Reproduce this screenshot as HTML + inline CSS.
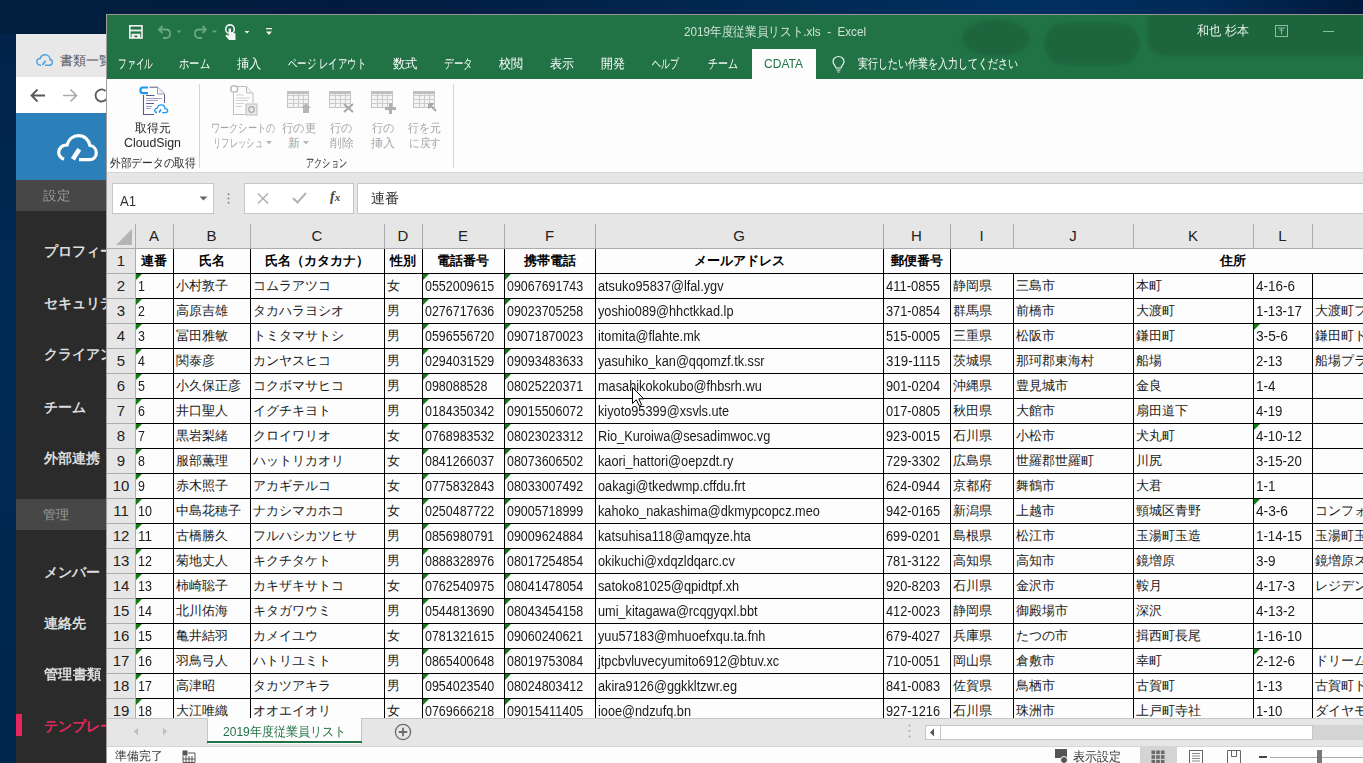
<!DOCTYPE html>
<html><head><meta charset="utf-8">
<style>
*{margin:0;padding:0;box-sizing:border-box}
html,body{width:1363px;height:763px;overflow:hidden;background:#04214a}
body{position:relative;font-family:"Liberation Sans",sans-serif;color:#000}
.t{position:absolute;white-space:nowrap;transform-origin:left center}
.r{position:absolute}
svg{position:absolute;overflow:visible}
.gt{position:absolute;width:0;height:0;border-top:6px solid #107c10;border-right:6px solid transparent}
</style></head><body>
<div class="r" style="left:0px;top:0px;width:1363px;height:763px;background:linear-gradient(90deg,#01203f 0%,#011b3e 25%,#01264f 50%,#00305f 75%,#002a58 88%,#011a3c 100%);"></div>
<div class="r" style="left:0px;top:34px;width:16px;height:729px;background:linear-gradient(180deg,#01234a 0%,#002a55 40%,#00254c 100%);"></div>
<div class="r" style="left:16px;top:34px;width:100px;height:729px;background:#2b2b2b;"></div>
<div class="r" style="left:16px;top:34px;width:100px;height:43px;background:#e8e8e8;"></div>
<svg style="left:36px;top:54px" width="17" height="12" viewBox="0 0 17 12"><path d="M5 11.2 C2 11.2 0.8 9.5 0.8 7.6 C0.8 5.5 2.4 4.3 4.2 4.5 C5 1.9 7.2 0.8 9.2 0.8 C12 0.8 14 2.9 14 5.5 C15.6 5.7 16.3 7 16.3 8.3 C16.3 10 15 11.2 13.5 11.2 H9" fill="none" stroke="#4aa3e0" stroke-width="1.4"/><path d="M6.5 11 L9.5 6.8" stroke="#4aa3e0" stroke-width="1.6"/></svg>
<div class="t" id="t1" style="left:60px;top:53.0px;font-size:13px;line-height:16px;color:#555;">書類一覧</div>
<div class="r" style="left:16px;top:77px;width:100px;height:36px;background:#ffffff;"></div>
<svg style="left:30px;top:88px" width="16" height="15" viewBox="0 0 16 15"><path d="M15 7.5 H2 M7.5 1.5 L1.5 7.5 L7.5 13.5" fill="none" stroke="#5a5a5a" stroke-width="1.8"/></svg>
<svg style="left:62px;top:88px" width="16" height="15" viewBox="0 0 16 15"><path d="M1 7.5 H14 M8.5 1.5 L14.5 7.5 L8.5 13.5" fill="none" stroke="#aaaaaa" stroke-width="1.6"/></svg>
<svg style="left:94px;top:88px" width="16" height="15" viewBox="0 0 16 15"><path d="M13.5 7.5 A6 6 0 1 1 11.5 3" fill="none" stroke="#5a5a5a" stroke-width="1.8"/></svg>
<div class="r" style="left:16px;top:113px;width:100px;height:67px;background:#2b80b9;"></div>
<svg style="left:57px;top:134px" width="41" height="28" viewBox="0 0 41 28"><path d="M7 25.3 C3.5 23.8 1.7 21.3 1.7 18.5 C1.7 14 5.5 10.8 10 11 C11.5 5.5 16 1.6 21.5 1.6 C27.5 1.6 32 6 33 11.5 C37 12 39.3 15.5 39.3 19 C39.3 23 36.5 25.6 32.5 25.6 H22" fill="none" stroke="#fff" stroke-width="3.2"/><path d="M15.8 25.3 L22.3 15.2" stroke="#fff" stroke-width="4.6"/></svg>
<div class="r" style="left:16px;top:180px;width:100px;height:31px;background:#474747;"></div>
<div class="t" id="t2" style="left:43px;top:188.0px;font-size:13px;line-height:16px;color:#9a9a9a;transform:scaleX(1.0385);">設定</div>
<div class="t" id="t3" style="left:44px;top:242.0px;font-size:14px;line-height:18px;color:#dcdcdc;font-weight:bold;">プロフィール</div>
<div class="t" id="t4" style="left:44px;top:294.0px;font-size:14px;line-height:18px;color:#dcdcdc;font-weight:bold;">セキュリティ</div>
<div class="t" id="t5" style="left:44px;top:345.0px;font-size:14px;line-height:18px;color:#dcdcdc;font-weight:bold;">クライアント</div>
<div class="t" id="t6" style="left:44px;top:398.0px;font-size:14px;line-height:18px;color:#dcdcdc;font-weight:bold;transform:scaleX(1.0000);">チーム</div>
<div class="t" id="t7" style="left:44px;top:448.5px;font-size:14px;line-height:18px;color:#dcdcdc;font-weight:bold;transform:scaleX(1.0000);">外部連携</div>
<div class="r" style="left:16px;top:499px;width:100px;height:31px;background:#474747;"></div>
<div class="t" id="t8" style="left:43px;top:506.5px;font-size:13px;line-height:16px;color:#9a9a9a;transform:scaleX(1.0000);">管理</div>
<div class="t" id="t9" style="left:44px;top:563.0px;font-size:14px;line-height:18px;color:#dcdcdc;font-weight:bold;transform:scaleX(1.0000);">メンバー</div>
<div class="t" id="t10" style="left:44px;top:614.0px;font-size:14px;line-height:18px;color:#dcdcdc;font-weight:bold;transform:scaleX(1.0000);">連絡先</div>
<div class="t" id="t11" style="left:44px;top:664.5px;font-size:14px;line-height:18px;color:#dcdcdc;font-weight:bold;transform:scaleX(1.0179);">管理書類</div>
<div class="t" id="t12" style="left:44px;top:716.5px;font-size:14px;line-height:18px;color:#e8265e;font-weight:bold;">テンプレート</div>
<div class="r" style="left:16px;top:714px;width:6px;height:22px;background:#e8265e;"></div>
<div class="r" style="left:106px;top:14px;width:1257px;height:749px;background:#e6e6e6;"></div>
<div class="r" style="left:106px;top:14px;width:1257px;height:1px;background:#9a9696;"></div>
<div class="r" style="left:106px;top:14px;width:1px;height:749px;background:#a29c9c;"></div>
<div class="r" style="left:107px;top:15px;width:1256px;height:64px;background:#217346;"></div>
<svg style="left:107px;top:15px;overflow:hidden" width="1256" height="64"><defs><filter id="bl"><feGaussianBlur stdDeviation="2"/></filter></defs><g fill="#1f653e" filter="url(#bl)"><ellipse cx="889" cy="23" rx="34" ry="18"/><rect x="938" y="8" width="94" height="42" rx="20"/><rect x="1040" y="-10" width="240" height="51" rx="18"/><rect x="1060" y="-10" width="100" height="30" rx="8"/></g></svg>
<svg style="left:129px;top:25px" width="14" height="14" viewBox="0 0 14 14"><rect x="0.8" y="0.8" width="12.2" height="12.2" fill="none" stroke="#f0f0f0" stroke-width="1.6"/><rect x="0.8" y="4.6" width="12.2" height="1.8" fill="#f0f0f0"/><path d="M2.5 8.8 H11.3 V13 H8.3 V10.6 H5.5 V13 H2.5 Z" fill="#f0f0f0"/></svg>
<svg style="left:157px;top:24px" width="30" height="15" viewBox="0 0 30 15"><path d="M2.5 5.5 H9.5 A4.3 4.3 0 0 1 9.5 14 H6 M5.5 2 L2 5.5 L5.5 9" fill="none" stroke="#6aa584" stroke-width="1.8"/><path d="M19.5 6.5 L22 9 L24.5 6.5 Z" fill="#6aa584"/></svg>
<svg style="left:192px;top:24px" width="30" height="15" viewBox="0 0 30 15"><path d="M13.5 5.5 H6.5 A4.3 4.3 0 0 0 6.5 14 H10 M10.5 2 L14 5.5 L10.5 9" fill="none" stroke="#6aa584" stroke-width="1.8"/><path d="M20 6.5 L22.5 9 L25 6.5 Z" fill="#6aa584"/></svg>
<svg style="left:224px;top:24px" width="30" height="17" viewBox="0 0 30 17"><circle cx="6" cy="5.2" r="4.3" fill="none" stroke="#f2f2f2" stroke-width="1.6"/><path d="M4.6 4.5 V12 L2.5 10.5 L1.5 12 L5 16 H11.5 V9.5 L7 8 V4.5 Z" fill="#f2f2f2"/><path d="M20.5 7 L23 9.5 L25.5 7 Z" fill="#f2f2f2"/></svg>
<svg style="left:265px;top:27px" width="8" height="10" viewBox="0 0 8 10"><rect x="1" y="1" width="6" height="1.3" fill="#f2f2f2"/><path d="M1 4.5 H7 L4 8 Z" fill="#f2f2f2"/></svg>
<div class="t" id="t13" style="left:684px;top:23.5px;font-size:13px;line-height:16px;color:#cfe3d6;transform:scaleX(0.8966);">2019年度従業員リスト.xls&nbsp; -&nbsp; Excel</div>
<div class="t" id="t14" style="left:1197px;top:22.5px;font-size:13px;line-height:16px;color:#e4f0e8;transform:scaleX(0.9348);">和也 杉本</div>
<svg style="left:1275px;top:25px" width="13" height="12" viewBox="0 0 13 12"><rect x="0.5" y="0.5" width="12" height="11" fill="none" stroke="#8fbba0"/><path d="M3 3 H10 M6.5 3.5 V9.5 M4.5 6 L6.5 4 L8.5 6" fill="none" stroke="#8fbba0"/></svg>
<div class="r" style="left:1323px;top:31px;width:11px;height:1px;background:#8fbba0;"></div>
<div class="t" id="t15" style="left:118px;top:55.5px;font-size:13px;line-height:16px;color:#ffffff;transform:scaleX(0.6731);">ファイル</div>
<div class="t" id="t16" style="left:179px;top:55.5px;font-size:13px;line-height:16px;color:#ffffff;transform:scaleX(0.7949);">ホーム</div>
<div class="t" id="t17" style="left:236.5px;top:55.5px;font-size:13px;line-height:16px;color:#ffffff;transform:scaleX(0.9423);">挿入</div>
<div class="t" id="t18" style="left:288px;top:55.5px;font-size:13px;line-height:16px;color:#ffffff;transform:scaleX(0.7247);">ページ レイアウト</div>
<div class="t" id="t19" style="left:392.5px;top:55.5px;font-size:13px;line-height:16px;color:#ffffff;transform:scaleX(0.9423);">数式</div>
<div class="t" id="t20" style="left:443.5px;top:55.5px;font-size:13px;line-height:16px;color:#ffffff;transform:scaleX(0.7308);">データ</div>
<div class="t" id="t21" style="left:498.5px;top:55.5px;font-size:13px;line-height:16px;color:#ffffff;transform:scaleX(0.9231);">校閲</div>
<div class="t" id="t22" style="left:549.5px;top:55.5px;font-size:13px;line-height:16px;color:#ffffff;transform:scaleX(0.9231);">表示</div>
<div class="t" id="t23" style="left:601px;top:55.5px;font-size:13px;line-height:16px;color:#ffffff;transform:scaleX(0.9231);">開発</div>
<div class="t" id="t24" style="left:652px;top:55.5px;font-size:13px;line-height:16px;color:#ffffff;transform:scaleX(0.6923);">ヘルプ</div>
<div class="t" id="t25" style="left:707.5px;top:55.5px;font-size:13px;line-height:16px;color:#ffffff;transform:scaleX(0.7692);">チーム</div>
<div class="r" style="left:752px;top:49px;width:64px;height:30px;background:#fdfdfd;"></div>
<div class="t" id="t26" style="left:764px;top:55.5px;font-size:13px;line-height:16px;color:#217346;transform:scaleX(0.9255);">CDATA</div>
<svg style="left:832px;top:56px" width="13" height="17" viewBox="0 0 13 17"><path d="M4 12 C4 9.8 1 8.5 1 5.5 A5.5 5 0 0 1 12 5.5 C12 8.5 9 9.8 9 12 Z" fill="none" stroke="#f2f2f2" stroke-width="1.2"/><path d="M4.5 14 H8.5 M5.5 16 H7.5" stroke="#f2f2f2" stroke-width="1.2"/></svg>
<div class="t" id="t27" style="left:858px;top:55.5px;font-size:13px;line-height:16px;color:#ffffff;transform:scaleX(0.7692);">実行したい作業を入力してください</div>
<div class="r" style="left:107px;top:79px;width:1256px;height:93px;background:#fdfdfd;"></div>
<div class="r" style="left:107px;top:172px;width:1256px;height:1px;background:#d6d6d6;"></div>
<svg style="left:140px;top:86px" width="30" height="30" viewBox="140 86 30 30"><path d="M149.5 87.2 H157.5 L164.5 94 V103" fill="none" stroke="#5a5a8a" stroke-width="1"/><path d="M157.5 87.2 V94 H164.5" fill="#eef0f8" stroke="#8a8a8a" stroke-width="0.8"/><path d="M143.5 95 V114.5 H154" fill="none" stroke="#5a5a8a" stroke-width="1.1"/><path d="M146 95.5 H154.5 M146 103.5 H154" stroke="#5a5a8a" stroke-width="1"/><path d="M146 98.5 H162 M146 100.5 H158 M146 106.5 H152 M146 108.5 H151" stroke="#a0a0c8" stroke-width="1"/><path d="M148 87.5 H142.8 A2.3 2.8 0 0 0 142.8 93.2 H148" fill="none" stroke="#1a9af0" stroke-width="2.2"/><path d="M157 112.5 C155.5 112.5 154.8 111.4 154.8 110.4 C154.8 109 155.8 108.3 157 108.4 C157.5 106.2 158.8 104.8 161 104.8 C163.3 104.8 165 106.4 165 108.6 C166.5 108.8 167.7 109.6 167.7 110.8 C167.7 112 166.8 112.6 165.5 112.6 H162" fill="none" stroke="#1a9af0" stroke-width="1.3"/><path d="M159 112.5 L161 109.3" stroke="#1a9af0" stroke-width="1.6"/></svg>
<div class="t" id="t28" style="left:135px;top:120.5px;font-size:12px;line-height:15px;color:#262626;transform:scaleX(0.9861);">取得元</div>
<div class="t" id="t29" style="left:124px;top:135.0px;font-size:13px;line-height:16px;color:#262626;transform:scaleX(0.9500);">CloudSign</div>
<div class="t" id="t30" style="left:110px;top:155.5px;font-size:12px;line-height:15px;color:#2a2a2a;transform:scaleX(0.8958);">外部データの取得</div>
<div class="r" style="left:199px;top:84px;width:1px;height:84px;background:#d5d5d5;"></div>
<svg style="left:230px;top:85px" width="32" height="33" viewBox="0 0 32 33"><path d="M7 1.5 H16.5 L23 8 V18" fill="none" stroke="#bdbdbd" stroke-width="1"/><path d="M16.5 1.5 V8 H23" fill="#f2f2f2" stroke="#bdbdbd"/><path d="M3.5 8 V29.5 H15" fill="none" stroke="#bdbdbd"/><path d="M6 10 H14 M6 13 H20 M6 15.5 H18 M6 18.5 H14 M6 21.5 H12" stroke="#d0d0d0"/><rect x="1" y="1" width="6.5" height="6" rx="2" fill="none" stroke="#bdbdbd" stroke-width="1.6"/><rect x="16" y="19" width="11" height="11" fill="#e8e8e8" stroke="#bdbdbd"/><circle cx="21.5" cy="24.5" r="2.8" fill="none" stroke="#a8a8a8" stroke-width="1.2"/></svg>
<svg style="left:287px;top:91px" width="26" height="24" viewBox="0 0 26 24"><rect x="0.5" y="0.5" width="21" height="16" fill="#f4f4f4" stroke="#c4c4c4"/><path d="M0.5 4.5 H21.5 M0.5 8.5 H21.5 M0.5 12.5 H21.5 M6.5 0.5 V16.5 M11.5 0.5 V16.5 M16.5 0.5 V16.5" stroke="#cbcbcb"/><rect x="0.5" y="0.5" width="21" height="2.5" fill="#bebebe"/><path d="M14 17 L19 12 L24 17 H22 V22 H16 V17 Z" fill="#b5b5b5"/></svg>
<svg style="left:329px;top:91px" width="26" height="24" viewBox="0 0 26 24"><rect x="0.5" y="0.5" width="21" height="16" fill="#f4f4f4" stroke="#c4c4c4"/><path d="M0.5 4.5 H21.5 M0.5 8.5 H21.5 M0.5 12.5 H21.5 M6.5 0.5 V16.5 M11.5 0.5 V16.5 M16.5 0.5 V16.5" stroke="#cbcbcb"/><rect x="0.5" y="0.5" width="21" height="2.5" fill="#bebebe"/><path d="M15 13 L24 21 M24 13 L15 21" stroke="#a8a8a8" stroke-width="2"/></svg>
<svg style="left:371px;top:91px" width="26" height="24" viewBox="0 0 26 24"><rect x="0.5" y="0.5" width="21" height="16" fill="#f4f4f4" stroke="#c4c4c4"/><path d="M0.5 4.5 H21.5 M0.5 8.5 H21.5 M0.5 12.5 H21.5 M6.5 0.5 V16.5 M11.5 0.5 V16.5 M16.5 0.5 V16.5" stroke="#cbcbcb"/><rect x="0.5" y="0.5" width="21" height="2.5" fill="#bebebe"/><path d="M19.5 12 V23 M14 17.5 H25" stroke="#b0b0b0" stroke-width="3"/></svg>
<svg style="left:413px;top:91px" width="26" height="24" viewBox="0 0 26 24"><rect x="0.5" y="0.5" width="21" height="16" fill="#f4f4f4" stroke="#c4c4c4"/><path d="M0.5 4.5 H21.5 M0.5 8.5 H21.5 M0.5 12.5 H21.5 M6.5 0.5 V16.5 M11.5 0.5 V16.5 M16.5 0.5 V16.5" stroke="#cbcbcb"/><rect x="0.5" y="0.5" width="21" height="2.5" fill="#bebebe"/><path d="M16 13 L23 20 M16 13 H20.5 M16 13 V17.5" fill="none" stroke="#a8a8a8" stroke-width="2"/></svg>
<div class="t" id="t31" style="left:210.5px;top:120.5px;font-size:12px;line-height:15px;color:#a6a6a6;transform:scaleX(0.7619);">ワークシートの</div>
<div class="t" id="t32" style="left:213px;top:135.5px;font-size:12px;line-height:15px;color:#a6a6a6;transform:scaleX(0.6944);">リフレッシュ</div>
<svg style="left:266px;top:141px" width="6" height="4" viewBox="0 0 6 4"><path d="M0 0 H6 L3 3.5 Z" fill="#b8b8b8"/></svg>
<div class="t" id="t33" style="left:282px;top:120.5px;font-size:12px;line-height:15px;color:#a6a6a6;transform:scaleX(0.9444);">行の更</div>
<div class="t" id="t34" style="left:288px;top:135.5px;font-size:12px;line-height:15px;color:#a6a6a6;transform:scaleX(1.0000);">新</div>
<svg style="left:303px;top:141px" width="6" height="4" viewBox="0 0 6 4"><path d="M0 0 H6 L3 3.5 Z" fill="#b8b8b8"/></svg>
<div class="t" id="t35" style="left:330px;top:120.5px;font-size:12px;line-height:15px;color:#a6a6a6;transform:scaleX(0.9375);">行の</div>
<div class="t" id="t36" style="left:330px;top:135.5px;font-size:12px;line-height:15px;color:#a6a6a6;transform:scaleX(0.9792);">削除</div>
<div class="t" id="t37" style="left:371.5px;top:120.5px;font-size:12px;line-height:15px;color:#a6a6a6;transform:scaleX(0.9375);">行の</div>
<div class="t" id="t38" style="left:371px;top:135.5px;font-size:12px;line-height:15px;color:#a6a6a6;transform:scaleX(1.0000);">挿入</div>
<div class="t" id="t39" style="left:408px;top:120.5px;font-size:12px;line-height:15px;color:#a6a6a6;transform:scaleX(0.9167);">行を元</div>
<div class="t" id="t40" style="left:408.5px;top:135.5px;font-size:12px;line-height:15px;color:#a6a6a6;transform:scaleX(0.8750);">に戻す</div>
<div class="t" id="t41" style="left:305.5px;top:156.0px;font-size:12px;line-height:15px;color:#2a2a2a;transform:scaleX(0.6833);">アクション</div>
<div class="r" style="left:453px;top:84px;width:1px;height:84px;background:#d5d5d5;"></div>
<div class="r" style="left:112px;top:183px;width:102px;height:31px;background:#c6c6c6;"></div>
<div class="r" style="left:113px;top:184px;width:100px;height:29px;background:#ffffff;"></div>
<div class="t" id="t42" style="left:120px;top:191.5px;font-size:14px;line-height:18px;color:#333333;transform:scaleX(0.9343);">A1</div>
<svg style="left:199px;top:196px" width="9" height="5" viewBox="0 0 9 5"><path d="M0.5 0.5 H8.5 L4.5 4.5 Z" fill="#666"/></svg>
<svg style="left:227px;top:193px" width="3" height="11" viewBox="0 0 3 11"><circle cx="1.5" cy="1.2" r="1" fill="#888"/><circle cx="1.5" cy="5.5" r="1" fill="#888"/><circle cx="1.5" cy="9.8" r="1" fill="#888"/></svg>
<div class="r" style="left:244px;top:183px;width:110px;height:31px;background:#c6c6c6;"></div>
<div class="r" style="left:245px;top:184px;width:108px;height:29px;background:#ffffff;"></div>
<svg style="left:257px;top:193px" width="12" height="11" viewBox="0 0 12 11"><path d="M1 0.5 L11 10.5 M11 0.5 L1 10.5" stroke="#b0b0b0" stroke-width="1.5"/></svg>
<svg style="left:292px;top:192px" width="15" height="12" viewBox="0 0 15 12"><path d="M1 6 L5.5 10.5 L14 1" fill="none" stroke="#b5b5b5" stroke-width="2.2"/></svg>
<div class="t" style="left:330px;top:189px;font-family:'Liberation Serif',serif;font-style:italic;font-weight:bold;font-size:14px;line-height:16px;color:#444">f<span style="font-size:11px">x</span></div>
<div class="r" style="left:357px;top:183px;width:1010px;height:31px;background:#c6c6c6;"></div>
<div class="r" style="left:358px;top:184px;width:1010px;height:29px;background:#ffffff;"></div>
<div class="t" id="t43" style="left:370.5px;top:189.0px;font-size:14px;line-height:18px;color:#333333;transform:scaleX(1.0179);">連番</div>
<div class="r" style="left:107px;top:224px;width:1256px;height:24px;background:#e6e6e6;"></div>
<div class="r" style="left:135px;top:248px;width:1228px;height:470px;background:#fdfdfd;"></div>
<div class="t" id="t44" style="left:135px;top:226.0px;font-size:15px;line-height:19px;color:#222;width:38px;text-align:center;transform-origin:center;">A</div>
<div class="t" id="t45" style="left:173px;top:226.0px;font-size:15px;line-height:19px;color:#222;width:77px;text-align:center;transform-origin:center;">B</div>
<div class="t" id="t46" style="left:250px;top:226.0px;font-size:15px;line-height:19px;color:#222;width:134px;text-align:center;transform-origin:center;">C</div>
<div class="t" id="t47" style="left:384px;top:226.0px;font-size:15px;line-height:19px;color:#222;width:38px;text-align:center;transform-origin:center;">D</div>
<div class="t" id="t48" style="left:422px;top:226.0px;font-size:15px;line-height:19px;color:#222;width:82px;text-align:center;transform-origin:center;">E</div>
<div class="t" id="t49" style="left:504px;top:226.0px;font-size:15px;line-height:19px;color:#222;width:91px;text-align:center;transform-origin:center;">F</div>
<div class="t" id="t50" style="left:595px;top:226.0px;font-size:15px;line-height:19px;color:#222;width:288px;text-align:center;transform-origin:center;">G</div>
<div class="t" id="t51" style="left:883px;top:226.0px;font-size:15px;line-height:19px;color:#222;width:67px;text-align:center;transform-origin:center;">H</div>
<div class="t" id="t52" style="left:950px;top:226.0px;font-size:15px;line-height:19px;color:#222;width:63px;text-align:center;transform-origin:center;">I</div>
<div class="t" id="t53" style="left:1013px;top:226.0px;font-size:15px;line-height:19px;color:#222;width:120px;text-align:center;transform-origin:center;">J</div>
<div class="t" id="t54" style="left:1133px;top:226.0px;font-size:15px;line-height:19px;color:#222;width:120px;text-align:center;transform-origin:center;">K</div>
<div class="t" id="t55" style="left:1253px;top:226.0px;font-size:15px;line-height:19px;color:#222;width:59px;text-align:center;transform-origin:center;">L</div>
<div class="t" id="t56" style="left:1312px;top:226.0px;font-size:15px;line-height:19px;color:#222;width:168px;text-align:center;transform-origin:center;">M</div>
<div class="r" style="left:173px;top:224px;width:1px;height:24px;background:#ababab;"></div>
<div class="r" style="left:250px;top:224px;width:1px;height:24px;background:#ababab;"></div>
<div class="r" style="left:384px;top:224px;width:1px;height:24px;background:#ababab;"></div>
<div class="r" style="left:422px;top:224px;width:1px;height:24px;background:#ababab;"></div>
<div class="r" style="left:504px;top:224px;width:1px;height:24px;background:#ababab;"></div>
<div class="r" style="left:595px;top:224px;width:1px;height:24px;background:#ababab;"></div>
<div class="r" style="left:883px;top:224px;width:1px;height:24px;background:#ababab;"></div>
<div class="r" style="left:950px;top:224px;width:1px;height:24px;background:#ababab;"></div>
<div class="r" style="left:1013px;top:224px;width:1px;height:24px;background:#ababab;"></div>
<div class="r" style="left:1133px;top:224px;width:1px;height:24px;background:#ababab;"></div>
<div class="r" style="left:1253px;top:224px;width:1px;height:24px;background:#ababab;"></div>
<div class="r" style="left:1312px;top:224px;width:1px;height:24px;background:#ababab;"></div>
<div class="r" style="left:1480px;top:224px;width:1px;height:24px;background:#ababab;"></div>
<div class="t" id="t57" style="left:107px;top:251.0px;font-size:15px;line-height:19px;color:#222;width:28px;text-align:center;transform-origin:center;">1</div>
<div class="r" style="left:107px;top:273px;width:28px;height:1px;background:#ababab;"></div>
<div class="t" id="t58" style="left:107px;top:276.0px;font-size:15px;line-height:19px;color:#222;width:28px;text-align:center;transform-origin:center;">2</div>
<div class="r" style="left:107px;top:298px;width:28px;height:1px;background:#ababab;"></div>
<div class="t" id="t59" style="left:107px;top:301.0px;font-size:15px;line-height:19px;color:#222;width:28px;text-align:center;transform-origin:center;">3</div>
<div class="r" style="left:107px;top:323px;width:28px;height:1px;background:#ababab;"></div>
<div class="t" id="t60" style="left:107px;top:326.0px;font-size:15px;line-height:19px;color:#222;width:28px;text-align:center;transform-origin:center;">4</div>
<div class="r" style="left:107px;top:348px;width:28px;height:1px;background:#ababab;"></div>
<div class="t" id="t61" style="left:107px;top:351.0px;font-size:15px;line-height:19px;color:#222;width:28px;text-align:center;transform-origin:center;">5</div>
<div class="r" style="left:107px;top:373px;width:28px;height:1px;background:#ababab;"></div>
<div class="t" id="t62" style="left:107px;top:376.0px;font-size:15px;line-height:19px;color:#222;width:28px;text-align:center;transform-origin:center;">6</div>
<div class="r" style="left:107px;top:398px;width:28px;height:1px;background:#ababab;"></div>
<div class="t" id="t63" style="left:107px;top:401.0px;font-size:15px;line-height:19px;color:#222;width:28px;text-align:center;transform-origin:center;">7</div>
<div class="r" style="left:107px;top:423px;width:28px;height:1px;background:#ababab;"></div>
<div class="t" id="t64" style="left:107px;top:426.0px;font-size:15px;line-height:19px;color:#222;width:28px;text-align:center;transform-origin:center;">8</div>
<div class="r" style="left:107px;top:448px;width:28px;height:1px;background:#ababab;"></div>
<div class="t" id="t65" style="left:107px;top:451.0px;font-size:15px;line-height:19px;color:#222;width:28px;text-align:center;transform-origin:center;">9</div>
<div class="r" style="left:107px;top:473px;width:28px;height:1px;background:#ababab;"></div>
<div class="t" id="t66" style="left:107px;top:476.0px;font-size:15px;line-height:19px;color:#222;width:28px;text-align:center;transform-origin:center;">10</div>
<div class="r" style="left:107px;top:498px;width:28px;height:1px;background:#ababab;"></div>
<div class="t" id="t67" style="left:107px;top:501.0px;font-size:15px;line-height:19px;color:#222;width:28px;text-align:center;transform-origin:center;">11</div>
<div class="r" style="left:107px;top:523px;width:28px;height:1px;background:#ababab;"></div>
<div class="t" id="t68" style="left:107px;top:526.0px;font-size:15px;line-height:19px;color:#222;width:28px;text-align:center;transform-origin:center;">12</div>
<div class="r" style="left:107px;top:548px;width:28px;height:1px;background:#ababab;"></div>
<div class="t" id="t69" style="left:107px;top:551.0px;font-size:15px;line-height:19px;color:#222;width:28px;text-align:center;transform-origin:center;">13</div>
<div class="r" style="left:107px;top:573px;width:28px;height:1px;background:#ababab;"></div>
<div class="t" id="t70" style="left:107px;top:576.0px;font-size:15px;line-height:19px;color:#222;width:28px;text-align:center;transform-origin:center;">14</div>
<div class="r" style="left:107px;top:598px;width:28px;height:1px;background:#ababab;"></div>
<div class="t" id="t71" style="left:107px;top:601.0px;font-size:15px;line-height:19px;color:#222;width:28px;text-align:center;transform-origin:center;">15</div>
<div class="r" style="left:107px;top:623px;width:28px;height:1px;background:#ababab;"></div>
<div class="t" id="t72" style="left:107px;top:626.0px;font-size:15px;line-height:19px;color:#222;width:28px;text-align:center;transform-origin:center;">16</div>
<div class="r" style="left:107px;top:648px;width:28px;height:1px;background:#ababab;"></div>
<div class="t" id="t73" style="left:107px;top:651.0px;font-size:15px;line-height:19px;color:#222;width:28px;text-align:center;transform-origin:center;">17</div>
<div class="r" style="left:107px;top:673px;width:28px;height:1px;background:#ababab;"></div>
<div class="t" id="t74" style="left:107px;top:676.0px;font-size:15px;line-height:19px;color:#222;width:28px;text-align:center;transform-origin:center;">18</div>
<div class="r" style="left:107px;top:698px;width:28px;height:1px;background:#ababab;"></div>
<div class="t" id="t75" style="left:107px;top:701.0px;font-size:15px;line-height:19px;color:#222;width:28px;text-align:center;transform-origin:center;">19</div>
<div class="r" style="left:107px;top:723px;width:28px;height:1px;background:#ababab;"></div>
<div class="t" id="t76" style="left:135px;top:253.0px;font-size:13px;line-height:16px;color:#000;font-weight:bold;width:38px;text-align:center;transform-origin:center;">連番</div>
<div class="t" id="t77" style="left:173px;top:253.0px;font-size:13px;line-height:16px;color:#000;font-weight:bold;width:77px;text-align:center;transform-origin:center;">氏名</div>
<div class="t" id="t78" style="left:250px;top:253.0px;font-size:13px;line-height:16px;color:#000;font-weight:bold;width:134px;text-align:center;transform-origin:center;">氏名（カタカナ）</div>
<div class="t" id="t79" style="left:384px;top:253.0px;font-size:13px;line-height:16px;color:#000;font-weight:bold;width:38px;text-align:center;transform-origin:center;">性別</div>
<div class="t" id="t80" style="left:422px;top:253.0px;font-size:13px;line-height:16px;color:#000;font-weight:bold;width:82px;text-align:center;transform-origin:center;">電話番号</div>
<div class="t" id="t81" style="left:504px;top:253.0px;font-size:13px;line-height:16px;color:#000;font-weight:bold;width:91px;text-align:center;transform-origin:center;">携帯電話</div>
<div class="t" id="t82" style="left:595px;top:253.0px;font-size:13px;line-height:16px;color:#000;font-weight:bold;width:288px;text-align:center;transform-origin:center;">メールアドレス</div>
<div class="t" id="t83" style="left:883px;top:253.0px;font-size:13px;line-height:16px;color:#000;font-weight:bold;width:67px;text-align:center;transform-origin:center;">郵便番号</div>
<div class="t" id="t84" style="left:950px;top:253.0px;font-size:13px;line-height:16px;color:#000;font-weight:bold;width:566px;text-align:center;transform-origin:center;">住所</div>
<div class="t" id="t85" style="left:138px;top:277.0px;font-size:14px;line-height:18px;color:#1a1a1a;transform:scaleX(0.8850);">1</div>
<div class="t" id="t86" style="left:176px;top:278.0px;font-size:13px;line-height:16px;color:#1a1a1a;">小村敦子</div>
<div class="t" id="t87" style="left:253px;top:278.0px;font-size:13px;line-height:16px;color:#1a1a1a;">コムラアツコ</div>
<div class="t" id="t88" style="left:387px;top:278.0px;font-size:13px;line-height:16px;color:#1a1a1a;">女</div>
<div class="t" id="t89" style="left:425px;top:277.0px;font-size:14px;line-height:18px;color:#1a1a1a;transform:scaleX(0.8899);">0552009615</div>
<div class="t" id="t90" style="left:507px;top:277.0px;font-size:14px;line-height:18px;color:#1a1a1a;transform:scaleX(0.8896);">09067691743</div>
<div class="t" id="t91" style="left:598px;top:277.0px;font-size:14px;line-height:18px;color:#1a1a1a;transform:scaleX(0.91);">atsuko95837@lfal.ygv</div>
<div class="t" id="t92" style="left:886px;top:277.0px;font-size:14px;line-height:18px;color:#1a1a1a;transform:scaleX(0.9305);">411-0855</div>
<div class="t" id="t93" style="left:953px;top:278.0px;font-size:13px;line-height:16px;color:#1a1a1a;">静岡県</div>
<div class="t" id="t94" style="left:1016px;top:278.0px;font-size:13px;line-height:16px;color:#1a1a1a;">三島市</div>
<div class="t" id="t95" style="left:1136px;top:278.0px;font-size:13px;line-height:16px;color:#1a1a1a;">本町</div>
<div class="t" id="t96" style="left:1256px;top:277.0px;font-size:14px;line-height:18px;color:#1a1a1a;transform:scaleX(0.9612);">4-16-6</div>
<div class="gt" style="left:136px;top:274px"></div>
<div class="gt" style="left:423px;top:274px"></div>
<div class="gt" style="left:505px;top:274px"></div>
<div class="t" id="t97" style="left:138px;top:302.0px;font-size:14px;line-height:18px;color:#1a1a1a;transform:scaleX(0.8850);">2</div>
<div class="t" id="t98" style="left:176px;top:303.0px;font-size:13px;line-height:16px;color:#1a1a1a;">高原吉雄</div>
<div class="t" id="t99" style="left:253px;top:303.0px;font-size:13px;line-height:16px;color:#1a1a1a;">タカハラヨシオ</div>
<div class="t" id="t100" style="left:387px;top:303.0px;font-size:13px;line-height:16px;color:#1a1a1a;">男</div>
<div class="t" id="t101" style="left:425px;top:302.0px;font-size:14px;line-height:18px;color:#1a1a1a;transform:scaleX(0.8899);">0276717636</div>
<div class="t" id="t102" style="left:507px;top:302.0px;font-size:14px;line-height:18px;color:#1a1a1a;transform:scaleX(0.8896);">09023705258</div>
<div class="t" id="t103" style="left:598px;top:302.0px;font-size:14px;line-height:18px;color:#1a1a1a;transform:scaleX(0.91);">yoshio089@hhctkkad.lp</div>
<div class="t" id="t104" style="left:886px;top:302.0px;font-size:14px;line-height:18px;color:#1a1a1a;transform:scaleX(0.9143);">371-0854</div>
<div class="t" id="t105" style="left:953px;top:303.0px;font-size:13px;line-height:16px;color:#1a1a1a;">群馬県</div>
<div class="t" id="t106" style="left:1016px;top:303.0px;font-size:13px;line-height:16px;color:#1a1a1a;">前橋市</div>
<div class="t" id="t107" style="left:1136px;top:303.0px;font-size:13px;line-height:16px;color:#1a1a1a;">大渡町</div>
<div class="t" id="t108" style="left:1256px;top:302.0px;font-size:14px;line-height:18px;color:#1a1a1a;transform:scaleX(0.9489);">1-13-17</div>
<div class="t" id="t109" style="left:1315px;top:303.0px;font-size:13px;line-height:16px;color:#1a1a1a;">大渡町フ</div>
<div class="gt" style="left:136px;top:299px"></div>
<div class="gt" style="left:423px;top:299px"></div>
<div class="gt" style="left:505px;top:299px"></div>
<div class="t" id="t110" style="left:138px;top:327.0px;font-size:14px;line-height:18px;color:#1a1a1a;transform:scaleX(0.8850);">3</div>
<div class="t" id="t111" style="left:176px;top:328.0px;font-size:13px;line-height:16px;color:#1a1a1a;">冨田雅敏</div>
<div class="t" id="t112" style="left:253px;top:328.0px;font-size:13px;line-height:16px;color:#1a1a1a;">トミタマサトシ</div>
<div class="t" id="t113" style="left:387px;top:328.0px;font-size:13px;line-height:16px;color:#1a1a1a;">男</div>
<div class="t" id="t114" style="left:425px;top:327.0px;font-size:14px;line-height:18px;color:#1a1a1a;transform:scaleX(0.8899);">0596556720</div>
<div class="t" id="t115" style="left:507px;top:327.0px;font-size:14px;line-height:18px;color:#1a1a1a;transform:scaleX(0.8896);">09071870023</div>
<div class="t" id="t116" style="left:598px;top:327.0px;font-size:14px;line-height:18px;color:#1a1a1a;transform:scaleX(0.91);">itomita@flahte.mk</div>
<div class="t" id="t117" style="left:886px;top:327.0px;font-size:14px;line-height:18px;color:#1a1a1a;transform:scaleX(0.9143);">515-0005</div>
<div class="t" id="t118" style="left:953px;top:328.0px;font-size:13px;line-height:16px;color:#1a1a1a;">三重県</div>
<div class="t" id="t119" style="left:1016px;top:328.0px;font-size:13px;line-height:16px;color:#1a1a1a;">松阪市</div>
<div class="t" id="t120" style="left:1136px;top:328.0px;font-size:13px;line-height:16px;color:#1a1a1a;">鎌田町</div>
<div class="t" id="t121" style="left:1256px;top:327.0px;font-size:14px;line-height:18px;color:#1a1a1a;transform:scaleX(0.9790);">3-5-6</div>
<div class="t" id="t122" style="left:1315px;top:328.0px;font-size:13px;line-height:16px;color:#1a1a1a;">鎌田町ド</div>
<div class="gt" style="left:136px;top:324px"></div>
<div class="gt" style="left:423px;top:324px"></div>
<div class="gt" style="left:505px;top:324px"></div>
<div class="gt" style="left:1254px;top:324px"></div>
<div class="t" id="t123" style="left:138px;top:352.0px;font-size:14px;line-height:18px;color:#1a1a1a;transform:scaleX(0.8850);">4</div>
<div class="t" id="t124" style="left:176px;top:353.0px;font-size:13px;line-height:16px;color:#1a1a1a;">関泰彦</div>
<div class="t" id="t125" style="left:253px;top:353.0px;font-size:13px;line-height:16px;color:#1a1a1a;">カンヤスヒコ</div>
<div class="t" id="t126" style="left:387px;top:353.0px;font-size:13px;line-height:16px;color:#1a1a1a;">男</div>
<div class="t" id="t127" style="left:425px;top:352.0px;font-size:14px;line-height:18px;color:#1a1a1a;transform:scaleX(0.8899);">0294031529</div>
<div class="t" id="t128" style="left:507px;top:352.0px;font-size:14px;line-height:18px;color:#1a1a1a;transform:scaleX(0.8896);">09093483633</div>
<div class="t" id="t129" style="left:598px;top:352.0px;font-size:14px;line-height:18px;color:#1a1a1a;transform:scaleX(0.91);">yasuhiko_kan@qqomzf.tk.ssr</div>
<div class="t" id="t130" style="left:886px;top:352.0px;font-size:14px;line-height:18px;color:#1a1a1a;transform:scaleX(0.9476);">319-1115</div>
<div class="t" id="t131" style="left:953px;top:353.0px;font-size:13px;line-height:16px;color:#1a1a1a;">茨城県</div>
<div class="t" id="t132" style="left:1016px;top:353.0px;font-size:13px;line-height:16px;color:#1a1a1a;">那珂郡東海村</div>
<div class="t" id="t133" style="left:1136px;top:353.0px;font-size:13px;line-height:16px;color:#1a1a1a;">船場</div>
<div class="t" id="t134" style="left:1256px;top:352.0px;font-size:14px;line-height:18px;color:#1a1a1a;transform:scaleX(0.9418);">2-13</div>
<div class="t" id="t135" style="left:1315px;top:353.0px;font-size:13px;line-height:16px;color:#1a1a1a;">船場プラ</div>
<div class="gt" style="left:136px;top:349px"></div>
<div class="gt" style="left:423px;top:349px"></div>
<div class="gt" style="left:505px;top:349px"></div>
<div class="t" id="t136" style="left:138px;top:377.0px;font-size:14px;line-height:18px;color:#1a1a1a;transform:scaleX(0.8850);">5</div>
<div class="t" id="t137" style="left:176px;top:378.0px;font-size:13px;line-height:16px;color:#1a1a1a;">小久保正彦</div>
<div class="t" id="t138" style="left:253px;top:378.0px;font-size:13px;line-height:16px;color:#1a1a1a;">コクボマサヒコ</div>
<div class="t" id="t139" style="left:387px;top:378.0px;font-size:13px;line-height:16px;color:#1a1a1a;">男</div>
<div class="t" id="t140" style="left:425px;top:377.0px;font-size:14px;line-height:18px;color:#1a1a1a;transform:scaleX(0.8904);">098088528</div>
<div class="t" id="t141" style="left:507px;top:377.0px;font-size:14px;line-height:18px;color:#1a1a1a;transform:scaleX(0.8896);">08025220371</div>
<div class="t" id="t142" style="left:598px;top:377.0px;font-size:14px;line-height:18px;color:#1a1a1a;transform:scaleX(0.91);">masahikokokubo@fhbsrh.wu</div>
<div class="t" id="t143" style="left:886px;top:377.0px;font-size:14px;line-height:18px;color:#1a1a1a;transform:scaleX(0.9143);">901-0204</div>
<div class="t" id="t144" style="left:953px;top:378.0px;font-size:13px;line-height:16px;color:#1a1a1a;">沖縄県</div>
<div class="t" id="t145" style="left:1016px;top:378.0px;font-size:13px;line-height:16px;color:#1a1a1a;">豊見城市</div>
<div class="t" id="t146" style="left:1136px;top:378.0px;font-size:13px;line-height:16px;color:#1a1a1a;">金良</div>
<div class="t" id="t147" style="left:1256px;top:377.0px;font-size:14px;line-height:18px;color:#1a1a1a;transform:scaleX(0.9637);">1-4</div>
<div class="gt" style="left:136px;top:374px"></div>
<div class="gt" style="left:423px;top:374px"></div>
<div class="gt" style="left:505px;top:374px"></div>
<div class="t" id="t148" style="left:138px;top:402.0px;font-size:14px;line-height:18px;color:#1a1a1a;transform:scaleX(0.8850);">6</div>
<div class="t" id="t149" style="left:176px;top:403.0px;font-size:13px;line-height:16px;color:#1a1a1a;">井口聖人</div>
<div class="t" id="t150" style="left:253px;top:403.0px;font-size:13px;line-height:16px;color:#1a1a1a;">イグチキヨト</div>
<div class="t" id="t151" style="left:387px;top:403.0px;font-size:13px;line-height:16px;color:#1a1a1a;">男</div>
<div class="t" id="t152" style="left:425px;top:402.0px;font-size:14px;line-height:18px;color:#1a1a1a;transform:scaleX(0.8899);">0184350342</div>
<div class="t" id="t153" style="left:507px;top:402.0px;font-size:14px;line-height:18px;color:#1a1a1a;transform:scaleX(0.8896);">09015506072</div>
<div class="t" id="t154" style="left:598px;top:402.0px;font-size:14px;line-height:18px;color:#1a1a1a;transform:scaleX(0.91);">kiyoto95399@xsvls.ute</div>
<div class="t" id="t155" style="left:886px;top:402.0px;font-size:14px;line-height:18px;color:#1a1a1a;transform:scaleX(0.9143);">017-0805</div>
<div class="t" id="t156" style="left:953px;top:403.0px;font-size:13px;line-height:16px;color:#1a1a1a;">秋田県</div>
<div class="t" id="t157" style="left:1016px;top:403.0px;font-size:13px;line-height:16px;color:#1a1a1a;">大館市</div>
<div class="t" id="t158" style="left:1136px;top:403.0px;font-size:13px;line-height:16px;color:#1a1a1a;">扇田道下</div>
<div class="t" id="t159" style="left:1256px;top:402.0px;font-size:14px;line-height:18px;color:#1a1a1a;transform:scaleX(0.9418);">4-19</div>
<div class="gt" style="left:136px;top:399px"></div>
<div class="gt" style="left:423px;top:399px"></div>
<div class="gt" style="left:505px;top:399px"></div>
<div class="t" id="t160" style="left:138px;top:427.0px;font-size:14px;line-height:18px;color:#1a1a1a;transform:scaleX(0.8850);">7</div>
<div class="t" id="t161" style="left:176px;top:428.0px;font-size:13px;line-height:16px;color:#1a1a1a;">黒岩梨緒</div>
<div class="t" id="t162" style="left:253px;top:428.0px;font-size:13px;line-height:16px;color:#1a1a1a;">クロイワリオ</div>
<div class="t" id="t163" style="left:387px;top:428.0px;font-size:13px;line-height:16px;color:#1a1a1a;">女</div>
<div class="t" id="t164" style="left:425px;top:427.0px;font-size:14px;line-height:18px;color:#1a1a1a;transform:scaleX(0.8899);">0768983532</div>
<div class="t" id="t165" style="left:507px;top:427.0px;font-size:14px;line-height:18px;color:#1a1a1a;transform:scaleX(0.8896);">08023023312</div>
<div class="t" id="t166" style="left:598px;top:427.0px;font-size:14px;line-height:18px;color:#1a1a1a;transform:scaleX(0.91);">Rio_Kuroiwa@sesadimwoc.vg</div>
<div class="t" id="t167" style="left:886px;top:427.0px;font-size:14px;line-height:18px;color:#1a1a1a;transform:scaleX(0.9143);">923-0015</div>
<div class="t" id="t168" style="left:953px;top:428.0px;font-size:13px;line-height:16px;color:#1a1a1a;">石川県</div>
<div class="t" id="t169" style="left:1016px;top:428.0px;font-size:13px;line-height:16px;color:#1a1a1a;">小松市</div>
<div class="t" id="t170" style="left:1136px;top:428.0px;font-size:13px;line-height:16px;color:#1a1a1a;">犬丸町</div>
<div class="t" id="t171" style="left:1256px;top:427.0px;font-size:14px;line-height:18px;color:#1a1a1a;transform:scaleX(0.9489);">4-10-12</div>
<div class="gt" style="left:136px;top:424px"></div>
<div class="gt" style="left:423px;top:424px"></div>
<div class="gt" style="left:505px;top:424px"></div>
<div class="gt" style="left:1254px;top:424px"></div>
<div class="t" id="t172" style="left:138px;top:452.0px;font-size:14px;line-height:18px;color:#1a1a1a;transform:scaleX(0.8850);">8</div>
<div class="t" id="t173" style="left:176px;top:453.0px;font-size:13px;line-height:16px;color:#1a1a1a;">服部薫理</div>
<div class="t" id="t174" style="left:253px;top:453.0px;font-size:13px;line-height:16px;color:#1a1a1a;">ハットリカオリ</div>
<div class="t" id="t175" style="left:387px;top:453.0px;font-size:13px;line-height:16px;color:#1a1a1a;">女</div>
<div class="t" id="t176" style="left:425px;top:452.0px;font-size:14px;line-height:18px;color:#1a1a1a;transform:scaleX(0.8899);">0841266037</div>
<div class="t" id="t177" style="left:507px;top:452.0px;font-size:14px;line-height:18px;color:#1a1a1a;transform:scaleX(0.8896);">08073606502</div>
<div class="t" id="t178" style="left:598px;top:452.0px;font-size:14px;line-height:18px;color:#1a1a1a;transform:scaleX(0.91);">kaori_hattori@oepzdt.ry</div>
<div class="t" id="t179" style="left:886px;top:452.0px;font-size:14px;line-height:18px;color:#1a1a1a;transform:scaleX(0.9143);">729-3302</div>
<div class="t" id="t180" style="left:953px;top:453.0px;font-size:13px;line-height:16px;color:#1a1a1a;">広島県</div>
<div class="t" id="t181" style="left:1016px;top:453.0px;font-size:13px;line-height:16px;color:#1a1a1a;">世羅郡世羅町</div>
<div class="t" id="t182" style="left:1136px;top:453.0px;font-size:13px;line-height:16px;color:#1a1a1a;">川尻</div>
<div class="t" id="t183" style="left:1256px;top:452.0px;font-size:14px;line-height:18px;color:#1a1a1a;transform:scaleX(0.9489);">3-15-20</div>
<div class="gt" style="left:136px;top:449px"></div>
<div class="gt" style="left:423px;top:449px"></div>
<div class="gt" style="left:505px;top:449px"></div>
<div class="t" id="t184" style="left:138px;top:477.0px;font-size:14px;line-height:18px;color:#1a1a1a;transform:scaleX(0.8850);">9</div>
<div class="t" id="t185" style="left:176px;top:478.0px;font-size:13px;line-height:16px;color:#1a1a1a;">赤木照子</div>
<div class="t" id="t186" style="left:253px;top:478.0px;font-size:13px;line-height:16px;color:#1a1a1a;">アカギテルコ</div>
<div class="t" id="t187" style="left:387px;top:478.0px;font-size:13px;line-height:16px;color:#1a1a1a;">女</div>
<div class="t" id="t188" style="left:425px;top:477.0px;font-size:14px;line-height:18px;color:#1a1a1a;transform:scaleX(0.8899);">0775832843</div>
<div class="t" id="t189" style="left:507px;top:477.0px;font-size:14px;line-height:18px;color:#1a1a1a;transform:scaleX(0.8896);">08033007492</div>
<div class="t" id="t190" style="left:598px;top:477.0px;font-size:14px;line-height:18px;color:#1a1a1a;transform:scaleX(0.91);">oakagi@tkedwmp.cffdu.frt</div>
<div class="t" id="t191" style="left:886px;top:477.0px;font-size:14px;line-height:18px;color:#1a1a1a;transform:scaleX(0.9143);">624-0944</div>
<div class="t" id="t192" style="left:953px;top:478.0px;font-size:13px;line-height:16px;color:#1a1a1a;">京都府</div>
<div class="t" id="t193" style="left:1016px;top:478.0px;font-size:13px;line-height:16px;color:#1a1a1a;">舞鶴市</div>
<div class="t" id="t194" style="left:1136px;top:478.0px;font-size:13px;line-height:16px;color:#1a1a1a;">大君</div>
<div class="t" id="t195" style="left:1256px;top:477.0px;font-size:14px;line-height:18px;color:#1a1a1a;transform:scaleX(0.9637);">1-1</div>
<div class="gt" style="left:136px;top:474px"></div>
<div class="gt" style="left:423px;top:474px"></div>
<div class="gt" style="left:505px;top:474px"></div>
<div class="t" id="t196" style="left:138px;top:502.0px;font-size:14px;line-height:18px;color:#1a1a1a;transform:scaleX(0.8923);">10</div>
<div class="t" id="t197" style="left:176px;top:503.0px;font-size:13px;line-height:16px;color:#1a1a1a;">中島花穂子</div>
<div class="t" id="t198" style="left:253px;top:503.0px;font-size:13px;line-height:16px;color:#1a1a1a;">ナカシマカホコ</div>
<div class="t" id="t199" style="left:387px;top:503.0px;font-size:13px;line-height:16px;color:#1a1a1a;">女</div>
<div class="t" id="t200" style="left:425px;top:502.0px;font-size:14px;line-height:18px;color:#1a1a1a;transform:scaleX(0.8899);">0250487722</div>
<div class="t" id="t201" style="left:507px;top:502.0px;font-size:14px;line-height:18px;color:#1a1a1a;transform:scaleX(0.8896);">09005718999</div>
<div class="t" id="t202" style="left:598px;top:502.0px;font-size:14px;line-height:18px;color:#1a1a1a;transform:scaleX(0.91);">kahoko_nakashima@dkmypcopcz.meo</div>
<div class="t" id="t203" style="left:886px;top:502.0px;font-size:14px;line-height:18px;color:#1a1a1a;transform:scaleX(0.9143);">942-0165</div>
<div class="t" id="t204" style="left:953px;top:503.0px;font-size:13px;line-height:16px;color:#1a1a1a;">新潟県</div>
<div class="t" id="t205" style="left:1016px;top:503.0px;font-size:13px;line-height:16px;color:#1a1a1a;">上越市</div>
<div class="t" id="t206" style="left:1136px;top:503.0px;font-size:13px;line-height:16px;color:#1a1a1a;">頸城区青野</div>
<div class="t" id="t207" style="left:1256px;top:502.0px;font-size:14px;line-height:18px;color:#1a1a1a;transform:scaleX(0.9790);">4-3-6</div>
<div class="t" id="t208" style="left:1315px;top:503.0px;font-size:13px;line-height:16px;color:#1a1a1a;">コンフォ</div>
<div class="gt" style="left:136px;top:499px"></div>
<div class="gt" style="left:423px;top:499px"></div>
<div class="gt" style="left:505px;top:499px"></div>
<div class="gt" style="left:1254px;top:499px"></div>
<div class="t" id="t209" style="left:138px;top:527.0px;font-size:14px;line-height:18px;color:#1a1a1a;transform:scaleX(0.9555);">11</div>
<div class="t" id="t210" style="left:176px;top:528.0px;font-size:13px;line-height:16px;color:#1a1a1a;">古橋勝久</div>
<div class="t" id="t211" style="left:253px;top:528.0px;font-size:13px;line-height:16px;color:#1a1a1a;">フルハシカツヒサ</div>
<div class="t" id="t212" style="left:387px;top:528.0px;font-size:13px;line-height:16px;color:#1a1a1a;">男</div>
<div class="t" id="t213" style="left:425px;top:527.0px;font-size:14px;line-height:18px;color:#1a1a1a;transform:scaleX(0.8899);">0856980791</div>
<div class="t" id="t214" style="left:507px;top:527.0px;font-size:14px;line-height:18px;color:#1a1a1a;transform:scaleX(0.8896);">09009624884</div>
<div class="t" id="t215" style="left:598px;top:527.0px;font-size:14px;line-height:18px;color:#1a1a1a;transform:scaleX(0.91);">katsuhisa118@amqyze.hta</div>
<div class="t" id="t216" style="left:886px;top:527.0px;font-size:14px;line-height:18px;color:#1a1a1a;transform:scaleX(0.9143);">699-0201</div>
<div class="t" id="t217" style="left:953px;top:528.0px;font-size:13px;line-height:16px;color:#1a1a1a;">島根県</div>
<div class="t" id="t218" style="left:1016px;top:528.0px;font-size:13px;line-height:16px;color:#1a1a1a;">松江市</div>
<div class="t" id="t219" style="left:1136px;top:528.0px;font-size:13px;line-height:16px;color:#1a1a1a;">玉湯町玉造</div>
<div class="t" id="t220" style="left:1256px;top:527.0px;font-size:14px;line-height:18px;color:#1a1a1a;transform:scaleX(0.9489);">1-14-15</div>
<div class="t" id="t221" style="left:1315px;top:528.0px;font-size:13px;line-height:16px;color:#1a1a1a;">玉湯町玉</div>
<div class="gt" style="left:136px;top:524px"></div>
<div class="gt" style="left:423px;top:524px"></div>
<div class="gt" style="left:505px;top:524px"></div>
<div class="t" id="t222" style="left:138px;top:552.0px;font-size:14px;line-height:18px;color:#1a1a1a;transform:scaleX(0.8923);">12</div>
<div class="t" id="t223" style="left:176px;top:553.0px;font-size:13px;line-height:16px;color:#1a1a1a;">菊地丈人</div>
<div class="t" id="t224" style="left:253px;top:553.0px;font-size:13px;line-height:16px;color:#1a1a1a;">キクチタケト</div>
<div class="t" id="t225" style="left:387px;top:553.0px;font-size:13px;line-height:16px;color:#1a1a1a;">男</div>
<div class="t" id="t226" style="left:425px;top:552.0px;font-size:14px;line-height:18px;color:#1a1a1a;transform:scaleX(0.8899);">0888328976</div>
<div class="t" id="t227" style="left:507px;top:552.0px;font-size:14px;line-height:18px;color:#1a1a1a;transform:scaleX(0.8896);">08017254854</div>
<div class="t" id="t228" style="left:598px;top:552.0px;font-size:14px;line-height:18px;color:#1a1a1a;transform:scaleX(0.91);">okikuchi@xdqzldqarc.cv</div>
<div class="t" id="t229" style="left:886px;top:552.0px;font-size:14px;line-height:18px;color:#1a1a1a;transform:scaleX(0.9143);">781-3122</div>
<div class="t" id="t230" style="left:953px;top:553.0px;font-size:13px;line-height:16px;color:#1a1a1a;">高知県</div>
<div class="t" id="t231" style="left:1016px;top:553.0px;font-size:13px;line-height:16px;color:#1a1a1a;">高知市</div>
<div class="t" id="t232" style="left:1136px;top:553.0px;font-size:13px;line-height:16px;color:#1a1a1a;">鏡増原</div>
<div class="t" id="t233" style="left:1256px;top:552.0px;font-size:14px;line-height:18px;color:#1a1a1a;transform:scaleX(0.9637);">3-9</div>
<div class="t" id="t234" style="left:1315px;top:553.0px;font-size:13px;line-height:16px;color:#1a1a1a;">鏡増原ス</div>
<div class="gt" style="left:136px;top:549px"></div>
<div class="gt" style="left:423px;top:549px"></div>
<div class="gt" style="left:505px;top:549px"></div>
<div class="t" id="t235" style="left:138px;top:577.0px;font-size:14px;line-height:18px;color:#1a1a1a;transform:scaleX(0.8923);">13</div>
<div class="t" id="t236" style="left:176px;top:578.0px;font-size:13px;line-height:16px;color:#1a1a1a;">柿崎聡子</div>
<div class="t" id="t237" style="left:253px;top:578.0px;font-size:13px;line-height:16px;color:#1a1a1a;">カキザキサトコ</div>
<div class="t" id="t238" style="left:387px;top:578.0px;font-size:13px;line-height:16px;color:#1a1a1a;">女</div>
<div class="t" id="t239" style="left:425px;top:577.0px;font-size:14px;line-height:18px;color:#1a1a1a;transform:scaleX(0.8899);">0762540975</div>
<div class="t" id="t240" style="left:507px;top:577.0px;font-size:14px;line-height:18px;color:#1a1a1a;transform:scaleX(0.8896);">08041478054</div>
<div class="t" id="t241" style="left:598px;top:577.0px;font-size:14px;line-height:18px;color:#1a1a1a;transform:scaleX(0.91);">satoko81025@qpidtpf.xh</div>
<div class="t" id="t242" style="left:886px;top:577.0px;font-size:14px;line-height:18px;color:#1a1a1a;transform:scaleX(0.9143);">920-8203</div>
<div class="t" id="t243" style="left:953px;top:578.0px;font-size:13px;line-height:16px;color:#1a1a1a;">石川県</div>
<div class="t" id="t244" style="left:1016px;top:578.0px;font-size:13px;line-height:16px;color:#1a1a1a;">金沢市</div>
<div class="t" id="t245" style="left:1136px;top:578.0px;font-size:13px;line-height:16px;color:#1a1a1a;">鞍月</div>
<div class="t" id="t246" style="left:1256px;top:577.0px;font-size:14px;line-height:18px;color:#1a1a1a;transform:scaleX(0.9612);">4-17-3</div>
<div class="t" id="t247" style="left:1315px;top:578.0px;font-size:13px;line-height:16px;color:#1a1a1a;">レジデン</div>
<div class="gt" style="left:136px;top:574px"></div>
<div class="gt" style="left:423px;top:574px"></div>
<div class="gt" style="left:505px;top:574px"></div>
<div class="t" id="t248" style="left:138px;top:602.0px;font-size:14px;line-height:18px;color:#1a1a1a;transform:scaleX(0.8923);">14</div>
<div class="t" id="t249" style="left:176px;top:603.0px;font-size:13px;line-height:16px;color:#1a1a1a;">北川佑海</div>
<div class="t" id="t250" style="left:253px;top:603.0px;font-size:13px;line-height:16px;color:#1a1a1a;">キタガワウミ</div>
<div class="t" id="t251" style="left:387px;top:603.0px;font-size:13px;line-height:16px;color:#1a1a1a;">男</div>
<div class="t" id="t252" style="left:425px;top:602.0px;font-size:14px;line-height:18px;color:#1a1a1a;transform:scaleX(0.8899);">0544813690</div>
<div class="t" id="t253" style="left:507px;top:602.0px;font-size:14px;line-height:18px;color:#1a1a1a;transform:scaleX(0.8896);">08043454158</div>
<div class="t" id="t254" style="left:598px;top:602.0px;font-size:14px;line-height:18px;color:#1a1a1a;transform:scaleX(0.91);">umi_kitagawa@rcqgyqxl.bbt</div>
<div class="t" id="t255" style="left:886px;top:602.0px;font-size:14px;line-height:18px;color:#1a1a1a;transform:scaleX(0.9143);">412-0023</div>
<div class="t" id="t256" style="left:953px;top:603.0px;font-size:13px;line-height:16px;color:#1a1a1a;">静岡県</div>
<div class="t" id="t257" style="left:1016px;top:603.0px;font-size:13px;line-height:16px;color:#1a1a1a;">御殿場市</div>
<div class="t" id="t258" style="left:1136px;top:603.0px;font-size:13px;line-height:16px;color:#1a1a1a;">深沢</div>
<div class="t" id="t259" style="left:1256px;top:602.0px;font-size:14px;line-height:18px;color:#1a1a1a;transform:scaleX(0.9612);">4-13-2</div>
<div class="gt" style="left:136px;top:599px"></div>
<div class="gt" style="left:423px;top:599px"></div>
<div class="gt" style="left:505px;top:599px"></div>
<div class="t" id="t260" style="left:138px;top:627.0px;font-size:14px;line-height:18px;color:#1a1a1a;transform:scaleX(0.8923);">15</div>
<div class="t" id="t261" style="left:176px;top:628.0px;font-size:13px;line-height:16px;color:#1a1a1a;">亀井結羽</div>
<div class="t" id="t262" style="left:253px;top:628.0px;font-size:13px;line-height:16px;color:#1a1a1a;">カメイユウ</div>
<div class="t" id="t263" style="left:387px;top:628.0px;font-size:13px;line-height:16px;color:#1a1a1a;">女</div>
<div class="t" id="t264" style="left:425px;top:627.0px;font-size:14px;line-height:18px;color:#1a1a1a;transform:scaleX(0.8899);">0781321615</div>
<div class="t" id="t265" style="left:507px;top:627.0px;font-size:14px;line-height:18px;color:#1a1a1a;transform:scaleX(0.8896);">09060240621</div>
<div class="t" id="t266" style="left:598px;top:627.0px;font-size:14px;line-height:18px;color:#1a1a1a;transform:scaleX(0.91);">yuu57183@mhuoefxqu.ta.fnh</div>
<div class="t" id="t267" style="left:886px;top:627.0px;font-size:14px;line-height:18px;color:#1a1a1a;transform:scaleX(0.9143);">679-4027</div>
<div class="t" id="t268" style="left:953px;top:628.0px;font-size:13px;line-height:16px;color:#1a1a1a;">兵庫県</div>
<div class="t" id="t269" style="left:1016px;top:628.0px;font-size:13px;line-height:16px;color:#1a1a1a;">たつの市</div>
<div class="t" id="t270" style="left:1136px;top:628.0px;font-size:13px;line-height:16px;color:#1a1a1a;">揖西町長尾</div>
<div class="t" id="t271" style="left:1256px;top:627.0px;font-size:14px;line-height:18px;color:#1a1a1a;transform:scaleX(0.9489);">1-16-10</div>
<div class="gt" style="left:136px;top:624px"></div>
<div class="gt" style="left:423px;top:624px"></div>
<div class="gt" style="left:505px;top:624px"></div>
<div class="t" id="t272" style="left:138px;top:652.0px;font-size:14px;line-height:18px;color:#1a1a1a;transform:scaleX(0.8923);">16</div>
<div class="t" id="t273" style="left:176px;top:653.0px;font-size:13px;line-height:16px;color:#1a1a1a;">羽鳥弓人</div>
<div class="t" id="t274" style="left:253px;top:653.0px;font-size:13px;line-height:16px;color:#1a1a1a;">ハトリユミト</div>
<div class="t" id="t275" style="left:387px;top:653.0px;font-size:13px;line-height:16px;color:#1a1a1a;">男</div>
<div class="t" id="t276" style="left:425px;top:652.0px;font-size:14px;line-height:18px;color:#1a1a1a;transform:scaleX(0.8899);">0865400648</div>
<div class="t" id="t277" style="left:507px;top:652.0px;font-size:14px;line-height:18px;color:#1a1a1a;transform:scaleX(0.8896);">08019753084</div>
<div class="t" id="t278" style="left:598px;top:652.0px;font-size:14px;line-height:18px;color:#1a1a1a;transform:scaleX(0.91);">jtpcbvluvecyumito6912@btuv.xc</div>
<div class="t" id="t279" style="left:886px;top:652.0px;font-size:14px;line-height:18px;color:#1a1a1a;transform:scaleX(0.9143);">710-0051</div>
<div class="t" id="t280" style="left:953px;top:653.0px;font-size:13px;line-height:16px;color:#1a1a1a;">岡山県</div>
<div class="t" id="t281" style="left:1016px;top:653.0px;font-size:13px;line-height:16px;color:#1a1a1a;">倉敷市</div>
<div class="t" id="t282" style="left:1136px;top:653.0px;font-size:13px;line-height:16px;color:#1a1a1a;">幸町</div>
<div class="t" id="t283" style="left:1256px;top:652.0px;font-size:14px;line-height:18px;color:#1a1a1a;transform:scaleX(0.9612);">2-12-6</div>
<div class="t" id="t284" style="left:1315px;top:653.0px;font-size:13px;line-height:16px;color:#1a1a1a;">ドリーム</div>
<div class="gt" style="left:136px;top:649px"></div>
<div class="gt" style="left:423px;top:649px"></div>
<div class="gt" style="left:505px;top:649px"></div>
<div class="gt" style="left:1254px;top:649px"></div>
<div class="t" id="t285" style="left:138px;top:677.0px;font-size:14px;line-height:18px;color:#1a1a1a;transform:scaleX(0.8923);">17</div>
<div class="t" id="t286" style="left:176px;top:678.0px;font-size:13px;line-height:16px;color:#1a1a1a;">高津昭</div>
<div class="t" id="t287" style="left:253px;top:678.0px;font-size:13px;line-height:16px;color:#1a1a1a;">タカツアキラ</div>
<div class="t" id="t288" style="left:387px;top:678.0px;font-size:13px;line-height:16px;color:#1a1a1a;">男</div>
<div class="t" id="t289" style="left:425px;top:677.0px;font-size:14px;line-height:18px;color:#1a1a1a;transform:scaleX(0.8899);">0954023540</div>
<div class="t" id="t290" style="left:507px;top:677.0px;font-size:14px;line-height:18px;color:#1a1a1a;transform:scaleX(0.8896);">08024803412</div>
<div class="t" id="t291" style="left:598px;top:677.0px;font-size:14px;line-height:18px;color:#1a1a1a;transform:scaleX(0.91);">akira9126@ggkkltzwr.eg</div>
<div class="t" id="t292" style="left:886px;top:677.0px;font-size:14px;line-height:18px;color:#1a1a1a;transform:scaleX(0.9143);">841-0083</div>
<div class="t" id="t293" style="left:953px;top:678.0px;font-size:13px;line-height:16px;color:#1a1a1a;">佐賀県</div>
<div class="t" id="t294" style="left:1016px;top:678.0px;font-size:13px;line-height:16px;color:#1a1a1a;">鳥栖市</div>
<div class="t" id="t295" style="left:1136px;top:678.0px;font-size:13px;line-height:16px;color:#1a1a1a;">古賀町</div>
<div class="t" id="t296" style="left:1256px;top:677.0px;font-size:14px;line-height:18px;color:#1a1a1a;transform:scaleX(0.9418);">1-13</div>
<div class="t" id="t297" style="left:1315px;top:678.0px;font-size:13px;line-height:16px;color:#1a1a1a;">古賀町ド</div>
<div class="gt" style="left:136px;top:674px"></div>
<div class="gt" style="left:423px;top:674px"></div>
<div class="gt" style="left:505px;top:674px"></div>
<div class="t" id="t298" style="left:138px;top:702.0px;font-size:14px;line-height:18px;color:#1a1a1a;transform:scaleX(0.8923);">18</div>
<div class="t" id="t299" style="left:176px;top:703.0px;font-size:13px;line-height:16px;color:#1a1a1a;">大江唯織</div>
<div class="t" id="t300" style="left:253px;top:703.0px;font-size:13px;line-height:16px;color:#1a1a1a;">オオエイオリ</div>
<div class="t" id="t301" style="left:387px;top:703.0px;font-size:13px;line-height:16px;color:#1a1a1a;">女</div>
<div class="t" id="t302" style="left:425px;top:702.0px;font-size:14px;line-height:18px;color:#1a1a1a;transform:scaleX(0.8899);">0769666218</div>
<div class="t" id="t303" style="left:507px;top:702.0px;font-size:14px;line-height:18px;color:#1a1a1a;transform:scaleX(0.9006);">09015411405</div>
<div class="t" id="t304" style="left:598px;top:702.0px;font-size:14px;line-height:18px;color:#1a1a1a;transform:scaleX(0.91);">iooe@ndzufq.bn</div>
<div class="t" id="t305" style="left:886px;top:702.0px;font-size:14px;line-height:18px;color:#1a1a1a;transform:scaleX(0.9143);">927-1216</div>
<div class="t" id="t306" style="left:953px;top:703.0px;font-size:13px;line-height:16px;color:#1a1a1a;">石川県</div>
<div class="t" id="t307" style="left:1016px;top:703.0px;font-size:13px;line-height:16px;color:#1a1a1a;">珠洲市</div>
<div class="t" id="t308" style="left:1136px;top:703.0px;font-size:13px;line-height:16px;color:#1a1a1a;">上戸町寺社</div>
<div class="t" id="t309" style="left:1256px;top:702.0px;font-size:14px;line-height:18px;color:#1a1a1a;transform:scaleX(0.9418);">1-10</div>
<div class="t" id="t310" style="left:1315px;top:703.0px;font-size:13px;line-height:16px;color:#1a1a1a;">ダイヤモ</div>
<div class="gt" style="left:136px;top:699px"></div>
<div class="gt" style="left:423px;top:699px"></div>
<div class="gt" style="left:505px;top:699px"></div>
<div class="r" style="left:173px;top:248px;width:1px;height:470px;background:#000;"></div>
<div class="r" style="left:250px;top:248px;width:1px;height:470px;background:#000;"></div>
<div class="r" style="left:384px;top:248px;width:1px;height:470px;background:#000;"></div>
<div class="r" style="left:422px;top:248px;width:1px;height:470px;background:#000;"></div>
<div class="r" style="left:504px;top:248px;width:1px;height:470px;background:#000;"></div>
<div class="r" style="left:595px;top:248px;width:1px;height:470px;background:#000;"></div>
<div class="r" style="left:883px;top:248px;width:1px;height:470px;background:#000;"></div>
<div class="r" style="left:950px;top:248px;width:1px;height:470px;background:#000;"></div>
<div class="r" style="left:1013px;top:273px;width:1px;height:445px;background:#000;"></div>
<div class="r" style="left:1133px;top:273px;width:1px;height:445px;background:#000;"></div>
<div class="r" style="left:1253px;top:273px;width:1px;height:445px;background:#000;"></div>
<div class="r" style="left:1312px;top:273px;width:1px;height:445px;background:#000;"></div>
<div class="r" style="left:135px;top:273px;width:1228px;height:1px;background:#000;"></div>
<div class="r" style="left:135px;top:298px;width:1228px;height:1px;background:#000;"></div>
<div class="r" style="left:135px;top:323px;width:1228px;height:1px;background:#000;"></div>
<div class="r" style="left:135px;top:348px;width:1228px;height:1px;background:#000;"></div>
<div class="r" style="left:135px;top:373px;width:1228px;height:1px;background:#000;"></div>
<div class="r" style="left:135px;top:398px;width:1228px;height:1px;background:#000;"></div>
<div class="r" style="left:135px;top:423px;width:1228px;height:1px;background:#000;"></div>
<div class="r" style="left:135px;top:448px;width:1228px;height:1px;background:#000;"></div>
<div class="r" style="left:135px;top:473px;width:1228px;height:1px;background:#000;"></div>
<div class="r" style="left:135px;top:498px;width:1228px;height:1px;background:#000;"></div>
<div class="r" style="left:135px;top:523px;width:1228px;height:1px;background:#000;"></div>
<div class="r" style="left:135px;top:548px;width:1228px;height:1px;background:#000;"></div>
<div class="r" style="left:135px;top:573px;width:1228px;height:1px;background:#000;"></div>
<div class="r" style="left:135px;top:598px;width:1228px;height:1px;background:#000;"></div>
<div class="r" style="left:135px;top:623px;width:1228px;height:1px;background:#000;"></div>
<div class="r" style="left:135px;top:648px;width:1228px;height:1px;background:#000;"></div>
<div class="r" style="left:135px;top:673px;width:1228px;height:1px;background:#000;"></div>
<div class="r" style="left:135px;top:698px;width:1228px;height:1px;background:#000;"></div>
<div class="r" style="left:135px;top:723px;width:1228px;height:1px;background:#000;"></div>
<svg style="left:116px;top:229px" width="16" height="16" viewBox="0 0 16 16"><path d="M16 0 V16 H0 Z" fill="#b4b4b4"/></svg>
<div class="r" style="left:107px;top:248px;width:1256px;height:1px;background:#ababab;"></div>
<div class="r" style="left:135px;top:224px;width:1px;height:494px;background:#ababab;"></div>
<div class="r" style="left:107px;top:718px;width:1256px;height:28px;background:#e6e6e6;"></div>
<div class="r" style="left:107px;top:718px;width:1256px;height:1px;background:#c6c6c6;"></div>
<svg style="left:133px;top:727px" width="6" height="9" viewBox="0 0 6 9"><path d="M5 0.5 L1 4.5 L5 8.5 Z" fill="#c0c0c0"/></svg>
<svg style="left:162px;top:727px" width="6" height="9" viewBox="0 0 6 9"><path d="M1 0.5 L5 4.5 L1 8.5 Z" fill="#c0c0c0"/></svg>
<div class="r" style="left:207px;top:718px;width:155px;height:26px;background:#fdfdfd;border-left:1px solid #c6c6c6;border-right:1px solid #c6c6c6;box-sizing:border-box"></div>
<div class="r" style="left:207px;top:741px;width:155px;height:2px;background:#217346;"></div>
<div class="t" id="t311" style="left:223px;top:723.5px;font-size:13px;line-height:16px;color:#217346;transform:scaleX(0.9254);">2019年度従業員リスト</div>
<svg style="left:394px;top:723px" width="18" height="18" viewBox="0 0 18 18"><circle cx="9" cy="9" r="7.6" fill="none" stroke="#6a6a6a" stroke-width="1.3"/><path d="M9 4.8 V13.2 M4.8 9 H13.2" stroke="#6a6a6a" stroke-width="1.8"/></svg>
<svg style="left:908px;top:724px" width="3" height="14" viewBox="0 0 3 14"><circle cx="1.5" cy="1.5" r="1" fill="#aaa"/><circle cx="1.5" cy="7" r="1" fill="#aaa"/><circle cx="1.5" cy="12.5" r="1" fill="#aaa"/></svg>
<div class="r" style="left:1312px;top:725px;width:51px;height:15px;background:#d4d4d4;"></div>
<div class="r" style="left:925px;top:725px;width:388px;height:15px;background:#c6c6c6;"></div>
<div class="r" style="left:926px;top:726px;width:386px;height:13px;background:#ffffff;"></div>
<div class="r" style="left:940px;top:725px;width:1px;height:15px;background:#c6c6c6;"></div>
<svg style="left:929px;top:728px" width="6" height="9" viewBox="0 0 6 9"><path d="M5 0.5 L1 4.5 L5 8.5 Z" fill="#555"/></svg>
<div class="r" style="left:107px;top:746px;width:1256px;height:17px;background:#fdfdfd;"></div>
<div class="r" style="left:107px;top:746px;width:1256px;height:1px;background:#d6d6d6;"></div>
<div class="t" id="t312" style="left:115px;top:748.5px;font-size:12px;line-height:15px;color:#333;transform:scaleX(0.9896);">準備完了</div>
<svg style="left:182px;top:750px" width="14" height="13" viewBox="0 0 14 13"><rect x="0.5" y="0.5" width="5" height="5" fill="#555"/><path d="M6 3 H13 V12.5 H1 V6 M4 6 V12.5 M7 6 V12.5 M10 6 V12.5 M1 9 H13" fill="none" stroke="#555"/></svg>
<svg style="left:1055px;top:749px" width="14" height="15" viewBox="0 0 14 15"><rect x="0" y="0" width="12" height="9" fill="#555"/><circle cx="9" cy="11" r="3.5" fill="#555" stroke="#fdfdfd"/></svg>
<div class="t" id="t313" style="left:1073px;top:749.0px;font-size:13px;line-height:16px;color:#333;transform:scaleX(0.9231);">表示設定</div>
<div class="r" style="left:1140px;top:747px;width:37px;height:16px;background:#d4d4d4;"></div>
<svg style="left:1151px;top:750px" width="14" height="14" viewBox="0 0 14 14"><g fill="#6a6a6a"><rect x="0.5" y="0.5" width="3.6" height="3.6"/><rect x="5.2" y="0.5" width="3.6" height="3.6"/><rect x="9.9" y="0.5" width="3.6" height="3.6"/><rect x="0.5" y="5.2" width="3.6" height="3.6"/><rect x="5.2" y="5.2" width="3.6" height="3.6"/><rect x="9.9" y="5.2" width="3.6" height="3.6"/><rect x="0.5" y="9.9" width="3.6" height="3.6"/><rect x="5.2" y="9.9" width="3.6" height="3.6"/><rect x="9.9" y="9.9" width="3.6" height="3.6"/></g></svg>
<svg style="left:1189px;top:750px" width="14" height="14" viewBox="0 0 14 14"><rect x="0.5" y="0.5" width="13" height="13" fill="none" stroke="#666"/><path d="M3 3.5 H11 M3 6 H11 M3 8.5 H11 M3 11 H11" stroke="#888"/></svg>
<svg style="left:1227px;top:750px" width="14" height="14" viewBox="0 0 14 14"><path d="M0.5 14 V0.5 H13.5 V14 M4.5 0.5 V6.5 H9.5 V0.5" fill="none" stroke="#666"/></svg>
<div class="r" style="left:1259px;top:756px;width:8px;height:2px;background:#444;"></div>
<div class="r" style="left:1270px;top:757px;width:93px;height:1px;background:#aaa;"></div>
<div class="r" style="left:1317px;top:750px;width:5px;height:13px;background:#777;"></div>
<svg style="left:632px;top:387px" width="14" height="22" viewBox="0 0 14 22"><path d="M0.5 0.5 V16.5 L4.3 12.8 L7.3 18.8 L9.6 17.8 L6.8 11.8 H11.8 Z" fill="#fff" stroke="#000" stroke-width="1"/></svg>
</body></html>
